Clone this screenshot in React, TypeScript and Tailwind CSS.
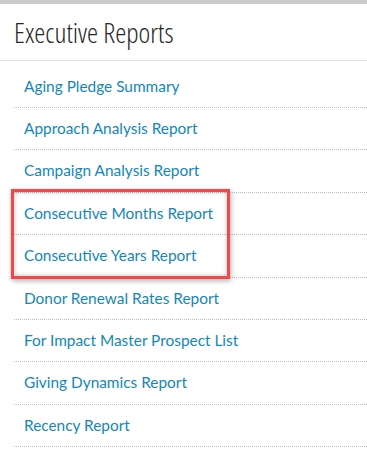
const reports = [
  "Aging Pledge Summary",
  "Approach Analysis Report",
  "Campaign Analysis Report",
  "Consecutive Months Report",
  "Consecutive Years Report",
  "Donor Renewal Rates Report",
  "For Impact Master Prospect List",
  "Giving Dynamics Report",
  "Recency Report",
];

function ReportRow({ name, first }: { name: string; first?: boolean }) {
  return (
    <li
      className={`flex items-center border-b border-dotted border-[#bdbdbd] pl-[10px] ${
        first ? "h-[47px] pt-[5px]" : "h-[42.4px]"
      }`}
    >
      <a href="#" className="text-[15.4px] leading-none text-[#1487b9]">
        {name}
      </a>
    </li>
  );
}

export default function App() {
  return (
    <div className="min-h-[462px] w-full bg-white font-['Lato','Noto_Sans',sans-serif]">
      <div className="h-[4px] bg-[#cccccc]" />
      <div className="flex h-[57px] items-center border-b border-[#dedede] pl-[14px]">
        <h2
          className="text-[28px] font-light text-[#262626] font-['Open_Sans',sans-serif]"
          style={{ fontStretch: "75%" }}
        >
          Executive Reports
        </h2>
      </div>
      <ul className="ml-[14px]">
        {reports.slice(0, 3).map((r, i) => (
          <ReportRow key={r} name={r} first={i === 0} />
        ))}
        <li className="relative">
          <ul>
            {reports.slice(3, 5).map((r) => (
              <ReportRow key={r} name={r} />
            ))}
          </ul>
          <div className="pointer-events-none absolute -top-[4px] -bottom-[1px] -left-[3px] w-[219px] border-[3px] border-[#f24848] shadow-[1px_2px_5px_rgba(0,0,0,0.3),inset_0_0_5px_rgba(0,0,0,0.25)]" />
        </li>
        {reports.slice(5).map((r) => (
          <ReportRow key={r} name={r} />
        ))}
      </ul>
    </div>
  );
}
